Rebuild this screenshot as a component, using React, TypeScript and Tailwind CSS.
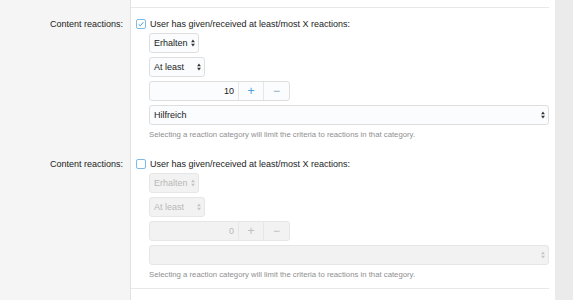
import React from 'react';

function Arrows({ disabled }: { disabled?: boolean }) {
  return (
    <svg width="4" height="8" viewBox="0 0 4 8" className={disabled ? 'text-[#c4c4c4]' : 'text-[#333]'}>
      <path d="M2 0.4 L3.9 3.3 H0.1 Z" fill="currentColor" />
      <path d="M2 7.6 L3.9 4.7 H0.1 Z" fill="currentColor" />
    </svg>
  );
}

function Select({ label, width, disabled }: { label: string; width: string; disabled?: boolean }) {
  return (
    <div
      className={`flex h-[20px] items-center justify-between rounded-[3px] border pl-[4px] pr-[3px] ${width} ${
        disabled ? 'border-[#e6e6e6] bg-[#f2f2f2] text-[#b8b8b8]' : 'border-[#dedede] bg-[#fafcfe] text-[#222]'
      }`}
    >
      <span>{label}</span>
      <Arrows disabled={disabled} />
    </div>
  );
}

function Checkbox({ checked }: { checked?: boolean }) {
  return (
    <span className="flex h-[10px] w-[10px] items-center justify-center rounded-[2px] border border-[#7fbbe6] bg-white">
      {checked && (
        <svg width="8" height="8" viewBox="0 0 8 8">
          <path d="M1.6 4.2 L3.3 5.8 L6.4 2.2" fill="none" stroke="#4a9ad8" strokeWidth="1" />
        </svg>
      )}
    </span>
  );
}

function ReactionRow({ enabled }: { enabled: boolean }) {
  const d = !enabled;
  return (
    <div className="flex">
      <div className="w-[131px] border-r border-[#e2e2e2] bg-[#f5f5f5] pr-[7px] pt-[7px] text-right">
        <div className="flex h-[18px] items-center justify-end text-[#222]">Content reactions:</div>
      </div>
      <div className="w-[424px] bg-white pr-[6px]">
        <div className="pb-[7px] pl-[5px] pt-[7px]">
          <div className="flex h-[18px] items-center gap-[4px] text-[#222]">
            <Checkbox checked={enabled} />
            <span>User has given/received at least/most X reactions:</span>
          </div>
          <div className="flex flex-col gap-[4px] pl-[13px]">
            <Select label="Erhalten" width="w-[50px]" disabled={d} />
            <Select label="At least" width="w-[56px]" disabled={d} />
            <div
              className={`flex h-[20px] w-[141px] rounded-[3px] border ${
                d ? 'border-[#e6e6e6] bg-[#f2f2f2]' : 'border-[#dedede] bg-[#fafcfe]'
              }`}
            >
              <div className={`flex flex-1 items-center justify-end pr-[4px] ${d ? 'text-[#b8b8b8]' : 'text-[#222]'}`}>
                {enabled ? '10' : '0'}
              </div>
              <div
                className={`flex w-[25px] items-center justify-center border-l text-[12px] ${
                  d ? 'border-[#e6e6e6] text-[#bdbdbd]' : 'border-[#e6e6e6] text-[#47a0e0]'
                }`}
              >
                +
              </div>
              <div
                className={`flex w-[26px] items-center justify-center border-l text-[12px] ${
                  d ? 'border-[#e6e6e6] text-[#bdbdbd]' : 'border-[#e6e6e6] text-[#8aa6c0]'
                }`}
              >
                −
              </div>
            </div>
            <Select label={enabled ? 'Hilfreich' : ''} width="w-[400px]" disabled={d} />
          </div>
          <div className="mt-[3px] flex h-[13px] items-center pl-[13px] text-[7.75px] text-[#8f8f8f]">
            Selecting a reaction category will limit the criteria to reactions in that category.
          </div>
        </div>
      </div>
    </div>
  );
}

export default function App() {
  return (
    <div className="h-[300px] w-[573px] overflow-hidden bg-[#ebebeb] text-[9px] leading-none [font-family:'Liberation_Sans',Arial,sans-serif]">
      <div className="w-[555px]">
        <div className="flex h-[8px]">
          <div className="w-[131px] border-r border-[#e2e2e2] bg-[#f5f5f5]" />
          <div className="w-[424px] bg-white pr-[6px]">
            <div className="h-[8px] border-b border-[#e8e8e8]" />
          </div>
        </div>
        <ReactionRow enabled />
        <ReactionRow enabled={false} />
        <div className="flex h-[20px]">
          <div className="w-[131px] border-r border-[#e2e2e2] bg-[#f5f5f5]" />
          <div className="w-[424px] bg-white pr-[6px]">
            <div className="border-t border-[#e8e8e8]" />
          </div>
        </div>
      </div>
    </div>
  );
}
